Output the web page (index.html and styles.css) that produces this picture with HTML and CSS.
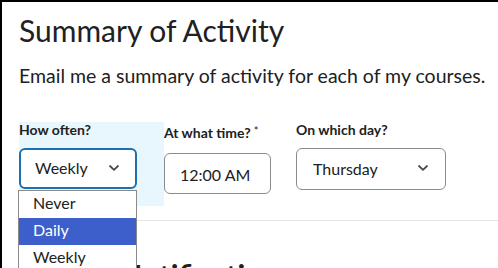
FILE: index.html
```html
<!DOCTYPE html>
<html>
<head>
<meta charset="utf-8">
<link rel="stylesheet" href="styles.css">
</head>
<body>
<div class="page">
  <h1 class="title">Summary of Activity</h1>
  <p class="desc">Email me a summary of activity for each of my courses.</p>
  <div class="fields">
    <div class="field field-often">
      <div class="label">How often?</div>
      <div class="select-wrap">
        <div class="select select-focused">
          <span>Weekly</span>
          <svg class="chev" width="12" height="8" viewBox="0 0 12 8"><path d="M2 2 L6 5.8 L10 2" fill="none" stroke="#494c4e" stroke-width="1.8" stroke-linecap="round" stroke-linejoin="round"/></svg>
        </div>
        <ul class="listbox">
          <li class="opt">Never</li>
          <li class="opt opt-active">Daily</li>
          <li class="opt">Weekly</li>
        </ul>
      </div>
    </div>
    <div class="field field-time">
      <div class="label">At what time?<span class="req">*</span></div>
      <div class="time-input">12:00 AM</div>
    </div>
    <div class="field field-day">
      <div class="label">On which day?</div>
      <div class="select select-day">
        <span>Thursday</span>
        <svg class="chev" width="12" height="8" viewBox="0 0 12 8"><path d="M2 2 L6 5.8 L10 2" fill="none" stroke="#494c4e" stroke-width="1.8" stroke-linecap="round" stroke-linejoin="round"/></svg>
      </div>
    </div>
  </div>
  <div class="rule"></div>
  <h2 class="title title-next">Instant Notifications</h2>
</div>
</body>
</html>
```

FILE: styles.css
```css
html, body {
  margin: 0;
  padding: 0;
  background: #fff;
}
body {
  font-family: Lato, "Noto Sans", sans-serif;
  color: #202122;
  width: 498px;
  height: 268px;
  overflow: hidden;
}
.page {
  border-top: 2px solid #000;
  border-left: 2px solid #000;
  padding-left: 17px;
  overflow: hidden;
  box-sizing: border-box;
  height: 268px;
}
.title {
  margin: 10px 0 0 0;
  font-size: 30px;
  font-weight: 400;
  line-height: 36px;
  white-space: nowrap;
}
.desc {
  margin: 16px 0 0 0;
  font-size: 19.5px;
  line-height: 23px;
  white-space: nowrap;
}
.fields {
  display: flex;
  align-items: flex-start;
  margin-top: 35px;
}
.field {
  display: flex;
  flex-direction: column;
}
.label {
  font-size: 14px;
  font-weight: 700;
  line-height: 16px;
  white-space: nowrap;
}
.req {
  font-weight: 400;
  font-size: 11px;
  margin-left: 3px;
  position: relative;
  top: -3px;
}
.field-often {
  width: 145px;
  background: #e8f7fe;
  padding-bottom: 17px;
}
.field-time {
  padding-top: 3px;
  margin-right: 25px;
}
.select-wrap {
  position: relative;
  margin-top: 10px;
  width: 118px;
}
.select {
  box-sizing: border-box;
  height: 41px;
  border: 1px solid #868c8f;
  border-radius: 6px;
  background: #fff;
  display: flex;
  align-items: center;
  justify-content: space-between;
  font-size: 16px;
  padding: 0 15px 2px 16px;
}
.select-focused {
  width: 118px;
  border: 2px solid #1c6fb0;
  padding: 0 15px 2px 14px;
}
.select-day {
  margin-top: 10px;
  width: 150px;
  height: 42px;
  padding-right: 16px;
}
.chev {
  display: block;
}
.time-input {
  box-sizing: border-box;
  margin-top: 11px;
  width: 107px;
  height: 41px;
  border: 1px solid #868c8f;
  border-radius: 6px;
  font-size: 16px;
  display: flex;
  align-items: center;
  padding-left: 15px;
  padding-top: 2px;
}
.listbox {
  position: absolute;
  top: calc(100% + 1px);
  left: -1px;
  width: 119px;
  box-sizing: border-box;
  margin: 0;
  padding: 0;
  list-style: none;
  background: #fff;
  border: 1px solid #8a8a8a;
  z-index: 5;
}
.opt {
  height: 27px;
  line-height: 23px;
  font-size: 16px;
  padding-left: 14px;
  color: #202122;
}
.opt-active {
  background: #3d5fcb;
  color: #fff;
}
.rule {
  height: 1px;
  background: #e3e6e9;
  margin-top: 14px;
  width: 500px;
}
.title-next {
  margin-top: 36px;
  font-weight: 700;
}
```
